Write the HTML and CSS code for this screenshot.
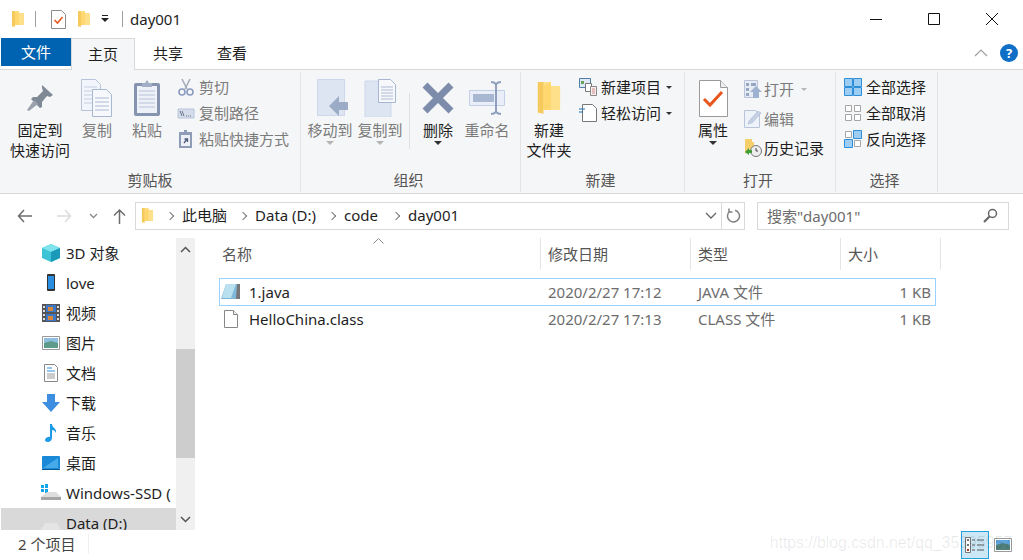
FILE: index.html
```html
<!DOCTYPE html>
<html lang="zh-CN">

<head>
    <meta charset="UTF-8">
    <title>day001</title>
    <link rel="stylesheet" href="styles.css">
</head>

<body>
    <svg class="defs" width="0" height="0">
        <symbol id="folder" viewBox="0 0 14 18">
            <path d="M1 1h7v2h5v12H4l-3 2z" fill="#ffe08a" />
            <path d="M1 1h3v16l-3-1z" fill="#f5c95c" />
            <path d="M8 1v14H4V3z" fill="#ffd76e" />
        </symbol>
        <symbol id="drive" viewBox="0 0 20 14">
            <path d="M4 1h12l4 7v5H0V8z" fill="#e4e4e4" />
            <path d="M0 8h20v5H0z" fill="#a9a9a9" />
            <path d="M2 10h3v1H2z" fill="#5fbf5f" />
        </symbol>
    </svg>

    <header class="titlebar">
        <svg class="qa-folder" width="14" height="18"><use href="#folder" /></svg>
        <span class="qa-sep"></span>
        <svg class="qa-check" width="15" height="19" viewBox="0 0 15 19">
            <path d="M.5.5h10l4 4v14H.5z" fill="#fff" stroke="#8c8c8c" />
            <path d="M3.5 10l3 3 5-6" fill="none" stroke="#e8561f" stroke-width="1.6" />
        </svg>
        <svg class="qa-folder2" width="14" height="18"><use href="#folder" /></svg>
        <svg class="qa-drop" width="10" height="8" viewBox="0 0 10 8">
            <path d="M2 0h6v1H2zM1 3h8L5 7z" fill="#222" />
        </svg>
        <span class="qa-sep qa-sep-last"></span>
        <span class="title">day001</span>
        <div class="winbtns">
            <svg width="14" height="14" viewBox="0 0 14 14"><path d="M1 7.5h12" stroke="#111" /></svg>
            <svg width="14" height="14" viewBox="0 0 14 14"><path d="M1.5 1.5h11v11h-11z" fill="none" stroke="#111" /></svg>
            <svg width="14" height="14" viewBox="0 0 14 14"><path d="M1 1l12 12M13 1L1 13" stroke="#111" /></svg>
        </div>
    </header>

    <nav class="tabs">
        <span class="tab tab-file">文件</span>
        <span class="tab tab-active">主页</span>
        <span class="tab">共享</span>
        <span class="tab">查看</span>
        <svg class="tab-chevron" width="14" height="8" viewBox="0 0 14 8"><path d="M1 7l6-6 6 6" fill="none" stroke="#a0a0a0" stroke-width="1.2" /></svg>
        <span class="help">?</span>
    </nav>

    <section class="ribbon">
        <div class="group group-clip">
            <div class="group-body">
                <div class="big big-pin">
                    <div class="big-icon">
                        <svg width="28" height="28" viewBox="0 0 28 28">
                            <path d="M16 1l11 10-3 2-3-1-5 6v5l-2 1-9-9 2-2h4l6-6-1-3z" fill="#7f8a96" />
                            <path d="M8 16l4 4-9 7-2-1z" fill="#9aa3ad" />
                        </svg>
                    </div>
                    <span>固定到<br>快速访问</span>
                </div>
                <div class="big off">
                    <div class="big-icon">
                        <svg width="32" height="38" viewBox="0 0 32 38">
                            <path d="M.5.5h14l5 5v26H.5z" fill="#f2f5fb" stroke="#b7c3d9" />
                            <path d="M3 8h13M3 12h13M3 16h13M3 20h13M3 24h13" stroke="#c5d0e3" />
                            <path d="M11.500 10.500h14l5 5v22h-19z" fill="#f6f8fc" stroke="#a9b8d2" />
                            <path d="M14 19h14M14 23h14M14 27h14M14 31h14" stroke="#aebcd5" />
                        </svg>
                    </div>
                    <span>复制</span>
                </div>
                <div class="big off">
                    <div class="big-icon">
                        <svg width="28" height="38" viewBox="0 0 28 38">
                            <rect x="1" y="4" width="26" height="33" rx="2" fill="#8794b0" />
                            <rect x="4" y="7" width="20" height="27" fill="#eef1f8" />
                            <path d="M6 12h16M6 16h16M6 20h16M6 24h16M6 28h16" stroke="#b6c2da" />
                            <path d="M9 4h3l2-3 2 3h3v4H9z" fill="#a2aec6" />
                        </svg>
                    </div>
                    <span>粘贴</span>
                </div>
                <div class="small-col">
                    <div class="small off">
                        <svg width="18" height="18" viewBox="0 0 16 18">
                            <path d="M4 1l5 10M12 1L7 11" stroke="#a4adbb" stroke-width="1.6" />
                            <circle cx="4" cy="14" r="3" fill="none" stroke="#8a9bc0" stroke-width="1.6" />
                            <circle cx="12" cy="14" r="3" fill="none" stroke="#8a9bc0" stroke-width="1.6" />
                        </svg>
                        <span>剪切</span>
                    </div>
                    <div class="small off">
                        <svg width="18" height="18" viewBox="0 0 16 18">
                            <path d="M0 5h16v9H0z" fill="#d5dded" stroke="#b9c4da" />
                            <path d="M2 7l2 5M4 7l2 5M8 12h1M10 12h1M12 12h1" stroke="#6a7488" />
                        </svg>
                        <span>复制路径</span>
                    </div>
                    <div class="small off">
                        <svg width="18" height="18" viewBox="0 0 16 18">
                            <rect x="1" y="2" width="13" height="16" fill="#8f9cb8" />
                            <rect x="3" y="5" width="9" height="11" fill="#edf0f7" />
                            <path d="M6 0h3v3H6z" fill="#8f9cb8" />
                            <path d="M6 13l3-4M6.500 9H9.500v3" fill="none" stroke="#4f5d7c" stroke-width="1.300" />
                        </svg>
                        <span>粘贴快捷方式</span>
                    </div>
                </div>
            </div>
            <div class="group-label">剪贴板</div>
        </div>

        <div class="group group-org">
            <div class="group-body">
                <div class="big off arrow-off">
                    <div class="big-icon">
                        <svg width="36" height="38" viewBox="0 0 36 38">
                            <path d="M5.500.500h27v36h-27z" fill="#dde5f3" stroke="#cdd7ea" />
                            <path d="M27 17L17 27l10 10v-6h9v-8h-9z" fill="#9cabc6" />
                        </svg>
                    </div>
                    <span>移动到</span>
                </div>
                <div class="big off arrow-off">
                    <div class="big-icon">
                        <svg width="32" height="38" viewBox="0 0 32 38">
                            <path d="M1 2h26v36H1z" fill="#dde5f3" stroke="#cdd7ea" />
                            <path d="M14.500.500h12l5 5v18h-17z" fill="#f6f8fc" stroke="#a9b8d2" />
                            <path d="M17 8h12M17 11h12M17 14h12M17 17h12M17 20h12" stroke="#aebcd5" />
                        </svg>
                    </div>
                    <span>复制到</span>
                </div>
                <span class="vsep"></span>
                <div class="big big-48 arrow-on">
                    <div class="big-icon">
                        <svg width="32" height="32" viewBox="0 0 32 32">
                            <path d="M3 3l26 26M29 3L3 29" stroke="#7d8cab" stroke-width="7" />
                        </svg>
                    </div>
                    <span>删除</span>
                </div>
                <div class="big off">
                    <div class="big-icon">
                        <svg width="36" height="34" viewBox="0 0 36 34">
                            <path d="M.5 9.500h35v15H.5z" fill="#e9eef8" stroke="#c3cfe4" />
                            <path d="M4 13h21v8H4z" fill="#a8b8d2" />
                            <path d="M22 1c3 0 4 1 5 2 1-1 2-2 5-2M27 3v28M22 33c3 0 4-1 5-2 1 1 2 2 5 2" fill="none" stroke="#8f9fbd" stroke-width="2" />
                        </svg>
                    </div>
                    <span>重命名</span>
                </div>
            </div>
            <div class="group-label">组织</div>
        </div>

        <div class="group group-new">
            <div class="group-body">
                <div class="big big-48">
                    <div class="big-icon">
                        <svg width="26" height="36" viewBox="0 0 14 18" preserveAspectRatio="none"><use href="#folder" /></svg>
                    </div>
                    <span>新建<br>文件夹</span>
                </div>
                <div class="small-col">
                    <div class="small">
                        <svg width="18" height="18" viewBox="0 0 18 18">
                            <path d="M.5.5h11v9H.5z" fill="#dfe9f6" stroke="#4f7ea8" />
                            <path d="M2 3h3v3H2z" fill="#6ba35a" />
                            <path d="M6.500 5.500h6v8h-6z" fill="#fff" stroke="#777" />
                            <path d="M11.500 8.500h6v9h-6z" fill="#fbeeee" stroke="#888" />
                            <path d="M13 11h3M13 13h3M13 15h3" stroke="#d08a8a" />
                        </svg>
                        <span>新建项目</span>
                        <i class="caret"></i>
                    </div>
                    <div class="small">
                        <svg width="18" height="18" viewBox="0 0 18 18">
                            <path d="M3.500.5h10l4 4v13h-14z" fill="#fff" stroke="#777" />
                            <path d="M0 5h6M0 8h4" stroke="#1c6fb5" stroke-width="1.200" />
                        </svg>
                        <span>轻松访问</span>
                        <i class="caret"></i>
                    </div>
                </div>
            </div>
            <div class="group-label">新建</div>
        </div>

        <div class="group group-open">
            <div class="group-body">
                <div class="big big-44 arrow-on">
                    <div class="big-icon">
                        <svg width="29" height="37" viewBox="0 0 29 37">
                            <path d="M.5.5h21l7 7v29H.5z" fill="#fff" stroke="#9a9a9a" />
                            <path d="M21.500.5v7h7" fill="#eee" stroke="#9a9a9a" />
                            <path d="M5 19l6 6 12-13" fill="none" stroke="#e8561f" stroke-width="3" />
                        </svg>
                    </div>
                    <span>属性</span>
                </div>
                <div class="small-col small-col-open">
                    <div class="small off">
                        <svg width="18" height="18" viewBox="0 0 18 18">
                            <path d="M.5.5h13v17H.5z" fill="#e6ebf4" stroke="#b9c4da" />
                            <path d="M2 3h3v3H2zM2 8h3v3H2zM2 13h3v3H2zM7 3h5v3H7z" fill="#97a6c2" />
                            <path d="M12 6l6 6h-3v6H9v-6H6z" fill="#9db1d0" />
                        </svg>
                        <span>打开</span>
                        <i class="caret caret-off"></i>
                    </div>
                    <div class="small off">
                        <svg width="18" height="18" viewBox="0 0 18 18">
                            <path d="M.5.5h11l4 4v13H.5z" fill="#eef2f9" stroke="#b9c4da" />
                            <path d="M4 14l1-3 9-10 3 2-9 10z" fill="#c4d0e4" stroke="#a5b3cc" stroke-width=".5" />
                        </svg>
                        <span>编辑</span>
                    </div>
                    <div class="small">
                        <svg width="18" height="18" viewBox="0 0 18 18">
                            <path d="M1 0h7v3h2v9H4l-3 3z" fill="#f7cf6a" />
                            <circle cx="12" cy="12" r="5.500" fill="#eee" stroke="#777" />
                            <path d="M12 9v3h2" fill="none" stroke="#444" />
                            <path d="M1 13l4-4v2h3v3H5v2z" fill="#3f9e3a" />
                        </svg>
                        <span>历史记录</span>
                    </div>
                </div>
            </div>
            <div class="group-label">打开</div>
        </div>

        <div class="group group-select">
            <div class="group-body">
                <div class="small-col">
                    <div class="small">
                        <svg width="18" height="18" viewBox="0 0 18 18">
                            <path d="M.5.5h8v8h-8zM9.500.5h8v8h-8zM.5 9.500h8v8h-8zM9.500 9.500h8v8h-8z" fill="#9dcdf2" stroke="#2e8fd8" />
                        </svg>
                        <span>全部选择</span>
                    </div>
                    <div class="small">
                        <svg width="18" height="18" viewBox="0 0 18 18">
                            <path d="M1.500 1.500h6v6h-6zM10.500 1.500h6v6h-6zM1.500 10.500h6v6h-6zM10.500 10.500h6v6h-6z" fill="#fff" stroke="#a6a6a6" />
                        </svg>
                        <span>全部取消</span>
                    </div>
                    <div class="small">
                        <svg width="18" height="18" viewBox="0 0 18 18">
                            <path d="M1.500 1.500h6v6h-6zM10.500 10.500h6v6h-6z" fill="#fff" stroke="#a6a6a6" />
                            <path d="M9.500.5h8v8h-8zM.5 9.500h8v8h-8z" fill="#9dcdf2" stroke="#2e8fd8" />
                        </svg>
                        <span>反向选择</span>
                    </div>
                </div>
            </div>
            <div class="group-label">选择</div>
        </div>
    </section>

    <div class="addressbar">
        <div class="navbtns">
            <svg width="16" height="14" viewBox="0 0 16 14"><path d="M15 7H2M7 1L1.500 7 7 13" fill="none" stroke="#6d6d6d" stroke-width="1.500" /></svg>
            <svg width="16" height="14" viewBox="0 0 16 14"><path d="M1 7h13M9 1l5.500 6L9 13" fill="none" stroke="#dcdcdc" stroke-width="1.500" /></svg>
            <svg width="9" height="6" viewBox="0 0 9 6"><path d="M1 1l3.500 3.500L8 1" fill="none" stroke="#8a8a8a" stroke-width="1.300" /></svg>
            <svg width="13" height="16" viewBox="0 0 13 16"><path d="M6.500 16V2M1 7.500l5.500-5.500L12 7.500" fill="none" stroke="#6d6d6d" stroke-width="1.500" /></svg>
        </div>
        <div class="address">
            <svg class="addr-folder" width="13" height="17"><use href="#folder" /></svg>
            <i class="crumb-sep"></i>
            <span class="crumb">此电脑</span>
            <i class="crumb-sep"></i>
            <span class="crumb">Data (D:)</span>
            <i class="crumb-sep"></i>
            <span class="crumb crumb-code">code</span>
            <i class="crumb-sep"></i>
            <span class="crumb">day001</span>
            <svg class="addr-drop" width="12" height="7" viewBox="0 0 12 7"><path d="M1 1l5 5 5-5" fill="none" stroke="#666" stroke-width="1.300" /></svg>
            <span class="addr-refresh">
                <svg width="15" height="15" viewBox="0 0 15 15"><path d="M9 2.200A6 6 0 1 1 3.500 3.500M3 .5v3.500h3.500" fill="none" stroke="#7f7f7f" stroke-width="1.500" /></svg>
            </span>
        </div>
        <div class="search">
            <span>搜索"day001"</span>
            <svg width="15" height="15" viewBox="0 0 15 15"><circle cx="9.500" cy="5.500" r="4" fill="none" stroke="#666" stroke-width="1.500" /><path d="M6.500 8.500L1 14" stroke="#666" stroke-width="2.200" /></svg>
        </div>
    </div>

    <main class="main">
        <aside class="sidebar">
            <ul class="tree">
                <li>
                    <svg width="18" height="18" viewBox="0 0 18 18">
                        <path d="M9 0l9 4v10l-9 4-9-4V4z" fill="#3cc3d6" />
                        <path d="M0 4l9 4 9-4-9-4z" fill="#7fe3ee" />
                        <path d="M9 8v10l9-4V4z" fill="#1a9ab8" />
                    </svg>
                    <span>3D 对象</span>
                </li>
                <li>
                    <svg width="18" height="18" viewBox="0 0 18 18">
                        <rect x="5" y="0" width="8" height="17" rx="1" fill="#333" />
                        <rect x="6" y="2" width="6" height="13" fill="#2a8fe0" />
                    </svg>
                    <span>love</span>
                </li>
                <li>
                    <svg width="18" height="18" viewBox="0 0 18 18">
                        <path d="M0 0h18v18H0z" fill="#555" />
                        <path d="M4 1h10v7H4z" fill="#3b78c9" />
                        <path d="M4 10h10v7H4z" fill="#3b78c9" />
                        <path d="M6 3h5v4H6zM6 12h5v4H6z" fill="#d8873a" />
                        <path d="M1 2h2v2H1zM1 6h2v2H1zM1 10h2v2H1zM1 14h2v2H1zM15 2h2v2h-2zM15 6h2v2h-2zM15 10h2v2h-2zM15 14h2v2h-2z" fill="#ddd" />
                    </svg>
                    <span>视频</span>
                </li>
                <li>
                    <svg width="18" height="18" viewBox="0 0 18 18">
                        <path d="M.5 2.500h17v13H.5z" fill="#fff" stroke="#999" />
                        <path d="M2 4h14v5H2z" fill="#8fbfe0" />
                        <path d="M2 9l7-2 7 2v5H2z" fill="#5f9b8a" />
                    </svg>
                    <span>图片</span>
                </li>
                <li>
                    <svg width="18" height="18" viewBox="0 0 18 18">
                        <path d="M2.500.5h10l3 3v14h-13z" fill="#fff" stroke="#888" />
                        <path d="M5 4h5M5 7h8" stroke="#2a8fe0" />
                        <path d="M5 10h8M5 12h8M5 14h8" stroke="#999" />
                    </svg>
                    <span>文档</span>
                </li>
                <li>
                    <svg width="18" height="18" viewBox="0 0 18 18">
                        <path d="M5 0h8v8h5l-9 10L0 8h5z" fill="#3d8ee0" />
                    </svg>
                    <span>下载</span>
                </li>
                <li>
                    <svg width="18" height="18" viewBox="0 0 18 18">
                        <path d="M8 0h2c0 4 5 4 4 9-1-2-2-3-4-3v8c0 2-2 4-4 4s-3-1-3-2 2-4 5-3z" fill="#1e9be8" />
                    </svg>
                    <span>音乐</span>
                </li>
                <li>
                    <svg width="18" height="18" viewBox="0 0 18 18">
                        <rect x="0" y="2" width="18" height="13" rx="1" fill="#1a8ad8" />
                        <path d="M1 14L16 4v10z" fill="#46a9ea" />
                        <path d="M0 15h18v1H0z" fill="#0a5a96" />
                    </svg>
                    <span>桌面</span>
                </li>
                <li>
                    <svg width="20" height="18" viewBox="0 0 20 18">
                        <path d="M0 1h3v3H0zM4 0h3v4H4zM0 5h3v3H0zM4 5h3v4H4z" fill="#12a4e8" />
                        <path d="M6 8h9l5 5v3H0v-3z" fill="#dedede" />
                        <path d="M0 13h20v3H0z" fill="#a5a5a5" />
                    </svg>
                    <span>Windows-SSD (</span>
                </li>
                <li class="tree-active">
                    <svg width="20" height="14"><use href="#drive" /></svg>
                    <span>Data (D:)</span>
                </li>
            </ul>
            <div class="scrollbar">
                <svg width="11" height="7" viewBox="0 0 11 7"><path d="M1 6l4.500-4.500L10 6" fill="none" stroke="#555" stroke-width="1.500" /></svg>
                <div class="thumb"></div>
                <svg width="11" height="7" viewBox="0 0 11 7"><path d="M1 1l4.500 4.500L10 1" fill="none" stroke="#555" stroke-width="1.500" /></svg>
            </div>
        </aside>

        <section class="files">
            <div class="head">
                <span class="col-name">名称</span>
                <span class="col-w">修改日期</span>
                <span class="col-w">类型</span>
                <span class="col-w col-size">大小</span>
                <svg class="sort" width="11" height="6" viewBox="0 0 11 6"><path d="M.5 5.500l5-5 5 5" fill="none" stroke="#8a8a8a" /></svg>
            </div>
            <div class="row row-focus">
                <span class="name">
                    <svg width="20" height="18" viewBox="0 0 20 18">
                        <path d="M5 1h14v15H0z" fill="#7fb8d8" />
                        <path d="M5 1h10L10 15H1z" fill="#b9e0ee" />
                        <path d="M16 1h3v15h-4z" fill="#777" />
                    </svg>
                    1.java
                </span>
                <span class="cell">2020/2/27 17:12</span>
                <span class="cell">JAVA 文件</span>
                <span class="size">1 KB</span>
            </div>
            <div class="row row-next">
                <span class="name">
                    <svg width="20" height="18" viewBox="0 0 20 18">
                        <path d="M3.500.5h9l4 4v13h-13z" fill="#fff" stroke="#888" />
                        <path d="M12.500.5v4h4" fill="#eee" stroke="#888" />
                    </svg>
                    HelloChina.class
                </span>
                <span class="cell">2020/2/27 17:13</span>
                <span class="cell">CLASS 文件</span>
                <span class="size">1 KB</span>
            </div>
        </section>
    </main>

    <footer class="statusbar">
        <span class="count">2 个项目</span>
        <div class="views">
            <span class="view view-on">
                <svg width="20" height="16" viewBox="0 0 20 16">
                    <path d="M.5.5h5v15h-5z" fill="#fff" stroke="#777" />
                    <path d="M2 2h2v2H2zM2 7h2v2H2z" fill="#777" />
                    <path d="M2 12h2v2H2z" fill="#b03a1a" />
                    <path d="M7 3h3M12 3h7M7 8h3M12 8h7M7 13h3M12 13h7" stroke="#555" />
                </svg>
            </span>
            <span class="view">
                <svg width="18" height="14" viewBox="0 0 18 14">
                    <path d="M.5.5h17v13H.5z" fill="#fff" stroke="#999" />
                    <path d="M2 2h14v5H2z" fill="#5fa4dc" />
                    <path d="M2 7l7-2 7 2v5H2z" fill="#4f7f78" />
                </svg>
            </span>
        </div>
    </footer>

    <div class="watermark">https://blog.csdn.net/qq_35395957</div>
</body>

</html>
```

FILE: styles.css
```css
* {
    box-sizing: border-box;
}

html,
body {
    margin: 0;
    height: 560px;
    overflow: hidden;
}

body {
    position: relative;
    background: #fff;
    color: #1e1e1e;
    font-family: "Noto Sans", "Noto Sans CJK SC", sans-serif;
    font-size: 15px;
    line-height: 20px;
    display: flex;
    flex-direction: column;
}

.defs {
    display: none;
}

svg {
    flex: none;
    display: block;
}

/* title bar */
.titlebar {
    height: 38px;
    display: flex;
    align-items: center;
    padding-left: 11px;
}

.qa-sep {
    width: 1px;
    height: 16px;
    background: #a0a0a0;
    margin: 0 15px 0 10px;
}

.qa-sep-last {
    margin: 0 7px 0 12px;
}

.qa-check {
    margin-right: 11px;
}

.qa-drop {
    margin-left: 9px;
}

.title {
    flex: 1;
}

.winbtns {
    display: flex;
    gap: 44px;
    padding-right: 24px;
}

/* tabs */
.tabs {
    position: relative;
    z-index: 1;
    height: 32px;
    display: flex;
    align-items: flex-start;
    padding-left: 1px;
}

.tab {
    width: 64px;
    height: 32px;
    padding-top: 5px;
    text-align: center;
}

.tab-file {
    width: 70px;
    height: 28px;
    padding-top: 4px;
    background: #0063b1;
    color: #fff;
}

.tab-active {
    background: #f5f6f7;
    border: 1px solid #d9d9d9;
    border-bottom: none;
    margin-right: 1px;
}

.tab-chevron {
    margin: 11px 0 0 auto;
}

.help {
    width: 18px;
    height: 18px;
    margin: 6px 5px 0 12px;
    border-radius: 50%;
    background: #0f6fc6;
    color: #fff;
    font-size: 13px;
    font-weight: bold;
    line-height: 18px;
    text-align: center;
}

/* ribbon */
.ribbon {
    height: 125px;
    display: flex;
    background: #f5f6f7;
    border-top: 1px solid #d9d9d9;
    border-bottom: 1px solid #d9d9d9;
    margin-top: -1px;
}

.group {
    display: flex;
    flex-direction: column;
    border-right: 1px solid #e1e3e6;
    margin: 2px 0 1px;
}

.group-clip {
    width: 301px;
}

.group-org {
    width: 220px;
}

.group-new {
    width: 164px;
}

.group-open {
    width: 151px;
}

.group-select {
    width: 102px;
}

.group-body {
    flex: 1;
    display: flex;
    padding-left: 4px;
}

.group-clip .group-body {
    padding-left: 9px;
}

.group-open .group-body {
    padding-left: 6px;
}

.group-label {
    height: 22px;
    padding-right: 4px;
    text-align: center;
    color: #555;
}

.group-clip .group-label {
    padding-right: 0;
}

.big {
    width: 50px;
    display: flex;
    flex-direction: column;
    align-items: center;
    text-align: center;
    white-space: nowrap;
}

.big-pin {
    width: 62px;
    margin-right: 1px;
}

.big-48 {
    width: 48px;
}

.big-44 {
    width: 44px;
}

.big-icon {
    height: 48px;
    display: flex;
    align-items: center;
    justify-content: center;
    padding-top: 4px;
}

.off {
    color: #7b7b7b;
}

.arrow-off::after,
.arrow-on::after {
    content: "";
    width: 0;
    margin-top: 1px;
    border: 4px solid transparent;
    border-bottom: none;
    border-top-color: #b5b5b5;
}

.arrow-on::after {
    border-top-color: #333;
}

.vsep {
    width: 1px;
    height: 56px;
    margin: 21px 4px 0;
    background: #dcdfe3;
}

.small-col {
    padding: 2px 0 0 4px;
    display: flex;
    flex-direction: column;
}

.group-clip .small-col {
    padding-left: 5px;
}

.group-new .small-col {
    padding-left: 6px;
}

.small-col-open {
    padding: 4px 0 0 9px;
    gap: 3.500px;
}

.small {
    height: 26px;
    display: flex;
    align-items: center;
    gap: 4px;
    white-space: nowrap;
}

.small-col-open .small {
    gap: 2px;
}

.caret {
    width: 0;
    margin-left: 1px;
    border: 3.500px solid transparent;
    border-bottom: none;
    border-top-color: #333;
}

.caret-off {
    margin-left: 5px;
    border-top-color: #b5b5b5;
}

/* address row */
.addressbar {
    height: 43px;
    display: flex;
    align-items: center;
    padding: 0 14px 0 17px;
}

.navbtns {
    width: 118px;
    display: flex;
    align-items: center;
    gap: 23px;
}

.navbtns svg:nth-child(3) {
    margin-left: -6px;
}

.navbtns svg:nth-child(4) {
    margin-left: -8px;
}

.address {
    width: 610px;
    height: 28px;
    display: flex;
    align-items: center;
    border: 1px solid #d9d9d9;
    padding-left: 5px;
}

.addr-folder {
    margin-right: 13px;
}

.crumb-sep {
    width: 6px;
    height: 6px;
    flex: none;
    border-top: 1px solid #777;
    border-right: 1px solid #777;
    transform: rotate(45deg);
    margin-right: 9px;
}

.crumb {
    margin: 0 13px 2px 0;
}

.crumb-code {
    margin-right: 15px;
}

.addr-drop {
    margin-left: auto;
}

.addr-refresh {
    width: 23px;
    height: 26px;
    margin-left: 4px;
    display: flex;
    align-items: center;
    justify-content: center;
    border-left: 1px solid #d9d9d9;
}

.search {
    width: 252px;
    height: 28px;
    margin-left: 12px;
    display: flex;
    align-items: center;
    justify-content: space-between;
    padding: 0 10px 0 9px;
    border: 1px solid #d9d9d9;
    color: #6d6d6d;
}

/* main area */
.main {
    flex: 1;
    min-height: 0;
    display: flex;
    overflow: hidden;
}

.sidebar {
    width: 196px;
    display: flex;
    padding-left: 1px;
    overflow: hidden;
}

.tree {
    list-style: none;
    width: 175px;
    margin: 0;
    padding: 1px 0 0;
}

.tree li {
    height: 30px;
    display: flex;
    align-items: center;
    gap: 5px;
    padding-left: 40px;
    white-space: nowrap;
    overflow: hidden;
}

.tree li svg {
    width: 20px;
}

/* last row is cut by the status bar, only 22px of it shows */
.tree .tree-active {
    height: 22px;
    padding-top: 8px;
    align-items: flex-start;
    line-height: 14px;
    background: #d9d9d9;
}

.tree-active svg {
    margin-top: 6px;
}

.scrollbar {
    width: 19px;
    background: #f0f0f0;
    display: flex;
    flex-direction: column;
    align-items: center;
    padding-top: 8px;
    margin-top: 1px;
}

.thumb {
    width: 100%;
    height: 109px;
    margin: 96px 0 58px;
    background: #cdcdcd;
}

.files {
    flex: 1;
    padding-top: 1px;
    position: relative;
}

.head {
    height: 32px;
    margin-left: 18px;
    display: flex;
    color: #555;
}

.head span {
    padding: 6px 0 0 8px;
    border-right: 1px solid #e5e5e5;
    height: 32px;
}

.head .col-w {
    padding-left: 7px;
}

.col-name {
    width: 327px;
}

.col-w {
    width: 150px;
}

.col-size {
    width: 100px;
}

.sort {
    position: absolute;
    top: 1px;
    left: 177px;
}

.row {
    width: 717px;
    height: 28px;
    margin-left: 23px;
    display: grid;
    grid-template-columns: 321px 150px 150px 96px;
    align-items: center;
    color: #6d6d6d;
    border: 1px solid transparent;
}

.head + .row {
    margin-top: 8px;
}

.row-next {
    margin-top: -1px;
}

.row-focus {
    border-color: #99d1ff;
}

.name {
    display: flex;
    align-items: center;
    gap: 8px;
    padding-left: 1px;
    color: #1e1e1e;
}

.cell {
    padding-left: 7px;
}

.size {
    text-align: right;
    padding-right: 6px;
}

/* status bar */
.statusbar {
    height: 30px;
    display: flex;
    align-items: center;
    justify-content: space-between;
    padding: 0 11px 0 18px;
    color: #444;
}

.count {
    height: 20px;
    padding-right: 13px;
    border-right: 1px solid #efefef;
    margin-top: -3px;
}

.views {
    display: flex;
    align-items: center;
    gap: 5px;
}

.view {
    width: 18px;
    height: 28px;
    display: flex;
    align-items: center;
    justify-content: center;
}

.view-on {
    width: 28px;
    background: #cce8f7;
    border: 1px solid #26a0da;
}

/* image host stamp over the corner */
.watermark {
    position: absolute;
    right: 11px;
    bottom: 7px;
    font-family: "Liberation Sans", sans-serif;
    font-size: 16px;
    letter-spacing: -0.1px;
    color: rgba(0, 0, 0, 0.09);
    white-space: nowrap;
}
```
